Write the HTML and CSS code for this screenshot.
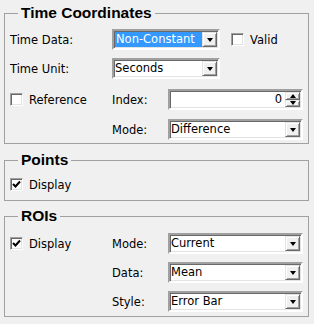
FILE: index.html
```html
<!DOCTYPE html>
<html lang="en">
<head>
    <meta charset="UTF-8">
    <title>Time Coordinates</title>
    <link rel="stylesheet" href="styles.css">
</head>
<body>
    <div class="panel">
        <fieldset class="group group-time">
            <legend>Time Coordinates</legend>
            <div class="row row-data">
                <span class="label col-first">Time Data:</span>
                <div class="combo combo-short">
                    <span class="value"><span class="selected">Non-Constant</span></span>
                    <span class="drop"><span class="arrow-down"></span></span>
                </div>
                <label class="check check-valid"><span class="box"></span>Valid</label>
            </div>
            <div class="row row-unit">
                <span class="label col-first">Time Unit:</span>
                <div class="combo combo-short">
                    <span class="value">Seconds</span>
                    <span class="drop"><span class="arrow-down"></span></span>
                </div>
            </div>
            <div class="row row-index">
                <label class="check col-first"><span class="box"></span>Reference</label>
                <span class="label col-second">Index:</span>
                <div class="spin">
                    <span class="value">0</span>
                    <span class="spin-buttons">
                        <span class="spin-btn"><span class="arrow-up"></span></span>
                        <span class="spin-btn"><span class="arrow-down"></span></span>
                    </span>
                </div>
            </div>
            <div class="row row-mode">
                <span class="col-first"></span>
                <span class="label col-second">Mode:</span>
                <div class="combo">
                    <span class="value">Difference</span>
                    <span class="drop"><span class="arrow-down"></span></span>
                </div>
            </div>
        </fieldset>

        <fieldset class="group group-points">
            <legend>Points</legend>
            <div class="row">
                <label class="check col-first"><span class="box checked"><svg width="9" height="9" viewBox="0 0 9 9"><path d="M1 4 L3.5 6.5 L8 1.5" fill="none" stroke="#000" stroke-width="2"/></svg></span>Display</label>
            </div>
        </fieldset>

        <fieldset class="group group-rois">
            <legend>ROIs</legend>
            <div class="row">
                <label class="check col-first"><span class="box checked"><svg width="9" height="9" viewBox="0 0 9 9"><path d="M1 4 L3.5 6.5 L8 1.5" fill="none" stroke="#000" stroke-width="2"/></svg></span>Display</label>
                <span class="label col-second">Mode:</span>
                <div class="combo">
                    <span class="value">Current</span>
                    <span class="drop"><span class="arrow-down"></span></span>
                </div>
            </div>
            <div class="row row-roi">
                <span class="col-first"></span>
                <span class="label col-second">Data:</span>
                <div class="combo">
                    <span class="value">Mean</span>
                    <span class="drop"><span class="arrow-down"></span></span>
                </div>
            </div>
            <div class="row row-roi">
                <span class="col-first"></span>
                <span class="label col-second">Style:</span>
                <div class="combo">
                    <span class="value">Error Bar</span>
                    <span class="drop"><span class="arrow-down"></span></span>
                </div>
            </div>
        </fieldset>
    </div>
</body>
</html>
```

FILE: styles.css
```css
body {
    margin: 0;
    padding: 0;
    background: #f0f0f0;
    font-family: "DejaVu Sans", sans-serif;
    font-size: 11.5px;
    color: #000;
}

.panel {
    padding: 4px 0 0 4px;
    width: 305px;
}

.group {
    margin: 0;
    padding: 0 5px 0 5px;
    border: 1px solid #a0a0a0;
    min-width: 0;
}

.group legend {
    margin-left: 8px;
    padding: 0 3px 0 3px;
    font-family: "Liberation Sans", Arial, sans-serif;
    font-weight: bold;
    font-size: 15.5px;
    line-height: 18px;
}

.group-time {
    padding-top: 7px;
    padding-bottom: 3px;
}

.group-points {
    margin-top: 7px;
    padding-top: 5px;
    padding-bottom: 5px;
}

.group-rois {
    margin-top: 6px;
    padding-top: 8px;
    padding-bottom: 4px;
}

.row {
    display: flex;
    align-items: center;
    height: 21px;
}

.row-unit {
    margin-top: 8px;
}

.row-index {
    margin-top: 10px;
}

.row-mode {
    margin-top: 9px;
}

.row-roi {
    margin-top: 8px;
}

.col-first {
    width: 102px;
    flex: none;
}

.col-second {
    width: 56px;
    flex: none;
}

.check {
    display: flex;
    align-items: center;
    gap: 6px;
}

.box {
    width: 11px;
    height: 11px;
    background: #fff;
    border: 1px solid;
    border-color: #a0a0a0 #fff #fff #a0a0a0;
    box-shadow: inset 1px 1px 0 #696969, inset -1px -1px 0 #e3e3e3;
    display: flex;
    align-items: center;
    justify-content: center;
    flex: none;
}

.box svg {
    display: block;
}

.check-valid {
    margin-left: 11px;
}

.combo,
.spin {
    width: 131px;
    height: 17px;
    background: #fff;
    border: 2px solid;
    border-color: #a0a0a0 #fff #fff #a0a0a0;
    box-shadow: inset 1px 1px 0 #696969, inset -1px -1px 0 #e3e3e3;
    display: flex;
    align-items: stretch;
}

.combo-short {
    width: 104px;
}

.combo .value {
    flex: 1;
    padding: 1px 2px 1px 1px;
    line-height: 15px;
    white-space: nowrap;
    overflow: hidden;
}

.combo .selected {
    display: inline-block;
    background: #3399ff;
    color: #fff;
    padding: 0 1px;
    width: 85px;
}

.drop,
.spin-btn {
    background: #f0f0f0;
    border: 1px solid;
    border-color: #e3e3e3 #696969 #696969 #e3e3e3;
    box-shadow: inset 1px 1px 0 #fff, inset -1px -1px 0 #a0a0a0;
    display: flex;
    align-items: center;
    justify-content: center;
}

.drop {
    width: 13px;
    margin: 1px 1px 1px 0;
}

.arrow-down {
    width: 0;
    height: 0;
    border-left: 3.5px solid transparent;
    border-right: 3.5px solid transparent;
    border-top: 4px solid #000;
}

.arrow-up {
    width: 0;
    height: 0;
    border-left: 3.5px solid transparent;
    border-right: 3.5px solid transparent;
    border-bottom: 4px solid #000;
}

.spin .value {
    flex: 1;
    text-align: right;
    padding-right: 3px;
    line-height: 17px;
}

.spin-buttons {
    display: flex;
    flex-direction: column;
    width: 15px;
    margin: 1px 1px 1px 0;
}

.spin-btn {
    flex: 1;
}
```
